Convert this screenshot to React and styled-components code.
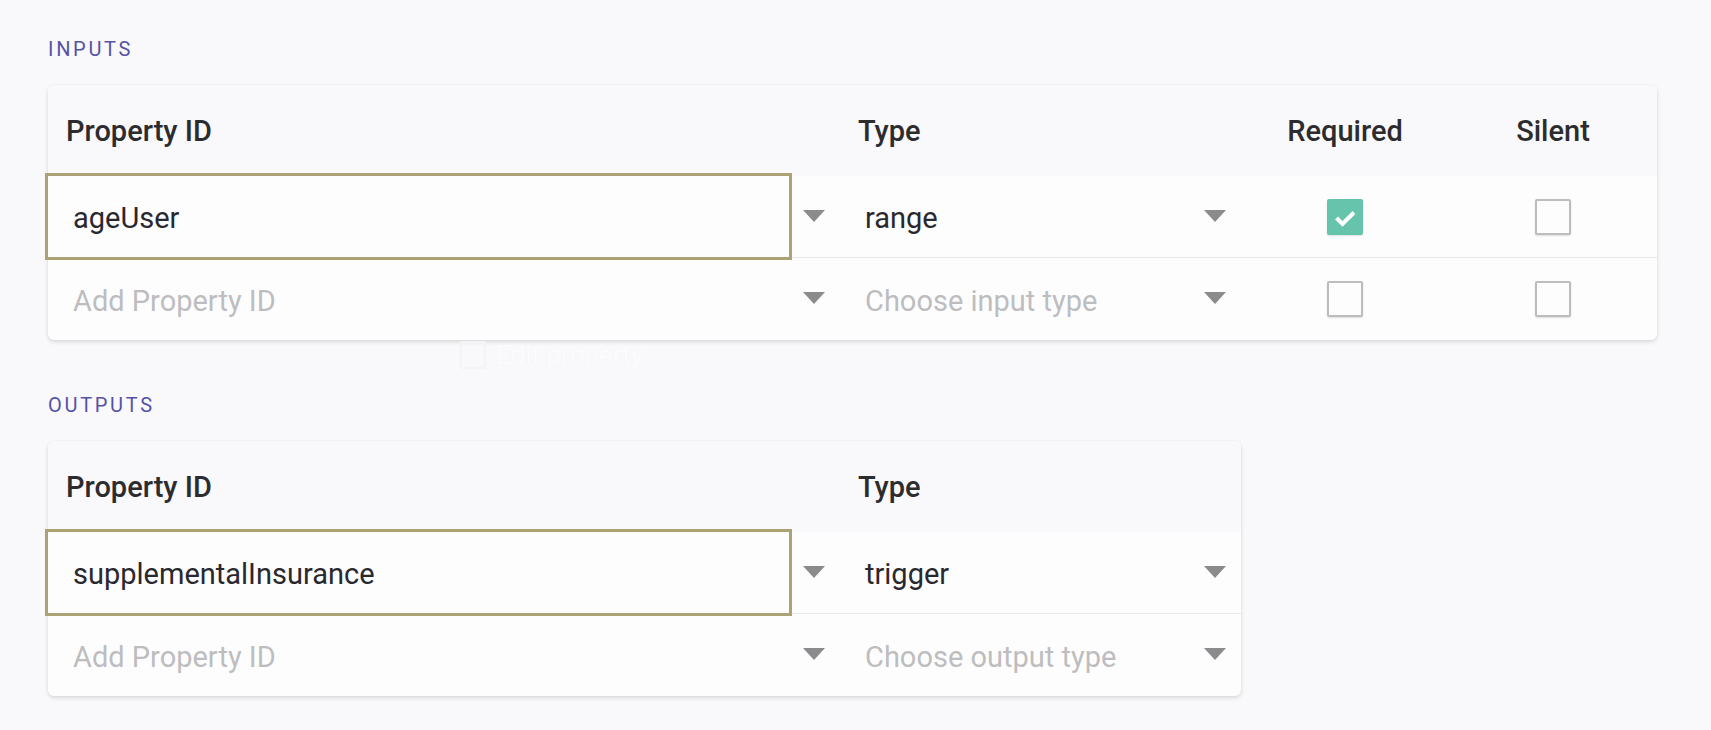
import React from "react";
import styled, { createGlobalStyle } from "styled-components";

const GlobalStyle = createGlobalStyle`
  html, body { margin: 0; padding: 0; background: #f9f9fb; }
  body { font-family: Roboto, "Noto Sans", "Liberation Sans", sans-serif; -webkit-font-smoothing: antialiased; }
  * { box-sizing: border-box; }
`;

const Page = styled.div`
  position: relative;
  min-height: 730px;
  padding: 37px 0 0 48px;
  display: flex;
  flex-direction: column;
`;

const Section = styled.section`
  display: flex;
  flex-direction: column;
  & + & { margin-top: 53px; }
`;

const SectionLabel = styled.div`
  font-size: 20px;
  line-height: 24px;
  letter-spacing: 2.7px;
  color: #5552a8;
  font-weight: 400;
  margin-bottom: 24px;
`;

const Card = styled.div`
  width: max-content;
  display: flex;
  flex-direction: column;
  background: #fdfdfe;
  border-radius: 6px;
  box-shadow: 0 2px 4px rgba(0, 0, 0, 0.13), 0 0 2px rgba(0, 0, 0, 0.05);
`;

const Row = styled.div`
  display: grid;
  grid-template-columns: ${(p) => p.$cols};
  height: ${(p) => (p.$header ? "91px" : "82px")};
  background: ${(p) => (p.$header ? "#f9f9fb" : "transparent")};
  border-radius: ${(p) => (p.$header ? "6px 6px 0 0" : "0")};
  border-bottom: ${(p) => (p.$divider ? "1px solid #e7e7ea" : "none")};
`;

const HeadCell = styled.div`
  display: flex;
  align-items: center;
  justify-content: ${(p) => (p.$center ? "center" : "flex-start")};
  padding-left: ${(p) => (p.$center ? "0" : "18px")};
  font-size: 29px;
  font-weight: 500;
  color: #2c2c2f;
`;

const SelectCell = styled.div`
  display: flex;
  align-items: center;
  height: 100%;
  padding-right: 15px;
`;

const Field = styled.div`
  flex: 1;
  height: 100%;
  display: flex;
  align-items: center;
  padding: 3px 0 0 25px;
  margin-right: 14px;
  font-size: 29px;
  color: ${(p) => (p.$placeholder ? "#bdbdc0" : "#29282f")};
  outline: ${(p) => (p.$focused ? "3px solid #ada176" : "none")};
  background: ${(p) => (p.$focused ? "#fdfdfe" : "transparent")};
  white-space: nowrap;
`;

const Caret = styled.svg`
  width: 22px;
  height: 12px;
  flex: none;
  margin-top: -2px;
`;

const CheckCell = styled.div`
  display: flex;
  align-items: center;
  justify-content: center;
`;

const Box = styled.div`
  width: 36px;
  height: 36px;
  border-radius: 2px;
  display: flex;
  align-items: center;
  justify-content: center;
  background: ${(p) => (p.$checked ? "#66c4ad" : "#fdfdfe")};
  border: ${(p) => (p.$checked ? "none" : "2px solid #bdbdbd")};
  box-shadow: 0 1px 2px rgba(0, 0, 0, 0.12);
`;

const Ghost = styled.div`
  position: absolute;
  left: 460px;
  top: 340px;
  display: flex;
  align-items: center;
  gap: 10px;
  font-size: 26px;
  color: #fcfcfd;
  text-shadow: 0 0 1px rgba(0, 0, 0, 0.04);
  pointer-events: none;
`;

const GhostIcon = styled.span`
  width: 26px;
  height: 28px;
  border: 2px solid #f4f4f6;
  border-radius: 2px;
`;

const CaretIcon = () => (
  <Caret viewBox="0 0 22 12">
    <path d="M0 0 H22 L11 12 Z" fill="#8b8b8e" />
  </Caret>
);

const Select = ({ value, placeholder, focused }) => (
  <SelectCell>
    <Field $focused={focused} $placeholder={!value}>
      {value || placeholder}
    </Field>
    <CaretIcon />
  </SelectCell>
);

const Checkbox = ({ checked }) => (
  <CheckCell>
    <Box $checked={checked}>
      {checked && (
        <svg width="36" height="36" viewBox="0 0 36 36">
          <path d="M9.5 19 L15.5 25 L27 13.5" fill="none" stroke="#fff" strokeWidth="4" />
        </svg>
      )}
    </Box>
  </CheckCell>
);

const INPUT_COLS = "792px 401px 208px 208px";
const OUTPUT_COLS = "792px 401px";

export default function App() {
  return (
    <>
      <GlobalStyle />
      <Page>
        <Section>
          <SectionLabel>INPUTS</SectionLabel>
          <Card>
            <Row $header $cols={INPUT_COLS}>
              <HeadCell>Property ID</HeadCell>
              <HeadCell>Type</HeadCell>
              <HeadCell $center>Required</HeadCell>
              <HeadCell $center>Silent</HeadCell>
            </Row>
            <Row $divider $cols={INPUT_COLS}>
              <Select value="ageUser" focused />
              <Select value="range" />
              <Checkbox checked />
              <Checkbox />
            </Row>
            <Row $cols={INPUT_COLS}>
              <Select placeholder="Add Property ID" />
              <Select placeholder="Choose input type" />
              <Checkbox />
              <Checkbox />
            </Row>
          </Card>
        </Section>
        <Section>
          <SectionLabel>OUTPUTS</SectionLabel>
          <Card>
            <Row $header $cols={OUTPUT_COLS}>
              <HeadCell>Property ID</HeadCell>
              <HeadCell>Type</HeadCell>
            </Row>
            <Row $divider $cols={OUTPUT_COLS}>
              <Select value="supplementalInsurance" focused />
              <Select value="trigger" />
            </Row>
            <Row $cols={OUTPUT_COLS}>
              <Select placeholder="Add Property ID" />
              <Select placeholder="Choose output type" />
            </Row>
          </Card>
        </Section>
        <Ghost>
          <GhostIcon />
          <span>Edit property</span>
        </Ghost>
      </Page>
    </>
  );
}
